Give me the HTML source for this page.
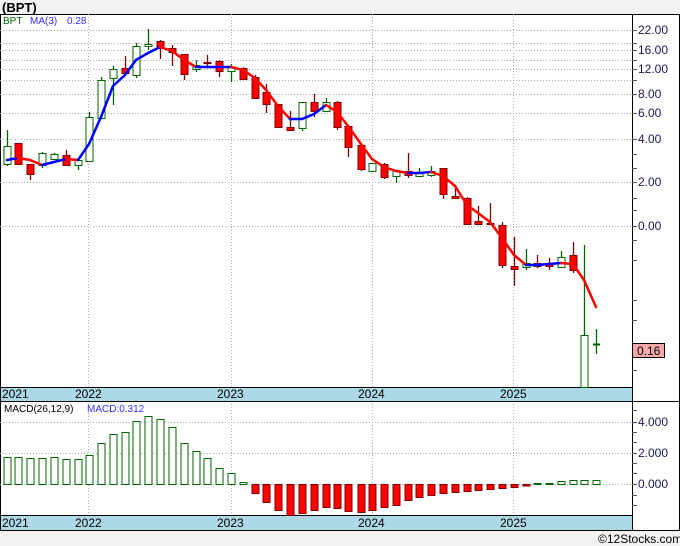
<!DOCTYPE html>
<html><head><meta charset="utf-8"><style>
html,body{margin:0;padding:0;background:#f2f2f2;}
svg{display:block;font-family:"Liberation Sans",sans-serif;}
</style></head><body>
<svg id="s" width="680" height="546" viewBox="0 0 680 546" xmlns="http://www.w3.org/2000/svg">
<rect x="0" y="0" width="680" height="546" fill="#f2f2f2"/>
<rect x="0.5" y="14.5" width="679" height="516" fill="#fff" stroke="#000"/>
<text x="2" y="12" font-size="13" font-weight="bold" fill="#000">(BPT)</text>
<g id="grid" stroke="#aaa" stroke-dasharray="1,2" stroke-width="1"></g>
<rect x="1" y="387" width="631" height="14" fill="#add8e6"/>
<rect x="1" y="515" width="631" height="15" fill="#add8e6"/>
<line x1="0" y1="387.5" x2="632" y2="387.5" stroke="#000"/>
<line x1="0" y1="401.5" x2="680" y2="401.5" stroke="#000"/>
<line x1="0" y1="515.5" x2="632" y2="515.5" stroke="#000"/>
<line x1="632.5" y1="14" x2="632.5" y2="530" stroke="#000"/>
<g id="ticks" stroke="#555"></g>
<g font-size="12" fill="#000">
<text x="2" y="398">2021</text><text x="75" y="398">2022</text><text x="217" y="398">2023</text><text x="358" y="398">2024</text><text x="500" y="398">2025</text>
<text x="2" y="527">2021</text><text x="75" y="527">2022</text><text x="217" y="527">2023</text><text x="358" y="527">2024</text><text x="500" y="527">2025</text>
</g>
<g font-size="12" fill="#1a1a50">
<text x="638" y="34">22.00</text><text x="638" y="54">16.00</text><text x="638" y="73">12.00</text>
<text x="638" y="98">8.00</text><text x="638" y="117">6.00</text><text x="638" y="143">4.00</text>
<text x="638" y="186">2.00</text><text x="638" y="230">0.00</text>
<text x="638" y="426">4.000</text><text x="638" y="457">2.000</text><text x="638" y="488">0.000</text>
</g>
<text x="3" y="24" font-size="10" fill="#006400">BPT</text>
<text x="30" y="24" font-size="10" fill="#3030ff">MA(3)</text>
<text x="67" y="24" font-size="10" fill="#3030ff">0.28</text>
<text x="4" y="412" font-size="10" fill="#000">MACD(26,12,9)</text>
<text x="87" y="412" font-size="10" fill="#3030ff">MACD:0.312</text>
<g id="c"></g>
<rect x="632.5" y="343.5" width="32" height="14" fill="#f8a8a8" stroke="#000"/>
<text x="637" y="355" font-size="12" fill="#000">0.16</text>
<text x="598" y="543" font-size="12" fill="#000">©12Stocks.com</text>
</svg>
<script>
var NS="http://www.w3.org/2000/svg",g=document.getElementById('grid'),c=document.getElementById('c'),tk=document.getElementById('ticks');
function el(p,t,a){var e=document.createElementNS(NS,t);for(var k in a)e.setAttribute(k,a[k]);p.appendChild(e);return e;}
[30,43,50,60,69,80,94,113,139,182,226].forEach(function(y){el(g,'line',{x1:0,y1:y+.5,x2:632,y2:y+.5});el(tk,'line',{x1:632,y1:y+.5,x2:637,y2:y+.5});});
[422,453,484].forEach(function(y){el(g,'line',{x1:0,y1:y+.5,x2:632,y2:y+.5});});
[410,422,432,442,453,463,473,484,495,505].forEach(function(y){el(tk,'line',{x1:632,y1:y+.5,x2:637,y2:y+.5});});
[154,168,198,210,240,260,300,320,370].forEach(function(y){el(tk,'line',{x1:632,y1:y+.5,x2:637,y2:y+.5});});
[88,231,372,513].forEach(function(x){el(g,'line',{x1:x+.5,y1:14,x2:x+.5,y2:387});el(g,'line',{x1:x+.5,y1:401,x2:x+.5,y2:515});});
var C=[[7,164,146,130,166],[18,143,164,143,164],[30,164,174,164,180],[42,165,153,152,168],[54,159,154,153,160],[66,155,165,150,165],[78,165,160,158,170],[89,161,117,112,161],[101,118,80,77,118],[113,78,69,66,105],[125,68,73,56,75],[136,75,46,43,78],[148,46,44,29,50],[160,41,48,40,59],[172,48,52,45,66],[184,54,74,54,80],[196,69,65,60,72],[207,62,63,55,67],[219,61,71,60,77],[231,71,67,64,82],[243,68,79,67,80],[255,77,98,75,99],[266,92,104,84,113],[278,104,127,104,128],[290,127,130,111,131],[302,128,102,102,131],[314,102,111,94,117],[326,111,102,98,112],[337,102,127,101,130],[348,126,147,126,157],[361,145,169,145,171],[372,171,163,163,172],[384,164,177,163,179],[396,176,170,170,183],[408,171,175,153,178],[419,176,173,168,177],[431,175,171,166,177],[443,168,194,168,199],[455,196,198,185,199],[467,198,224,197,224],[478,221,224,206,225],[490,223,224,203,225],[502,225,265,222,268],[514,266,269,237,286],[526,267,263,249,270],[537,263,266,255,268],[549,264,266,258,270],[561,267,257,251,267],[573,255,270,242,273],[584,387,335,245,387],[596,344.5,344,329,354]];
C.forEach(function(d){var x=d[0],up=d[2]<d[1],col=up?'#006400':'#800000';
el(c,'line',{x1:x+.5,y1:d[3],x2:x+.5,y2:d[4],stroke:col,'stroke-width':1.3});
var t=Math.min(d[1],d[2]),b=Math.max(d[1],d[2]);
if(b-t<1){el(c,'line',{x1:x-3,y1:t+.5,x2:x+4,y2:t+.5,stroke:col,'stroke-width':2});}
else el(c,'rect',{x:x-3,y:t+.5,width:7,height:b-t,fill:up?'#fff':'#f00',stroke:up?'#006400':'#800000','stroke-width':1});});
var M=[[7,160],[18,158],[30,160],[42,165],[54,162],[66,159],[78,160],[89,144],[101,117],[113,86],[125,75],[136,60],[148,53],[160,47],[172,51],[184,60],[196,67],[207,67],[219,67],[231,67],[243,70],[255,78],[266,90],[278,106],[290,119],[302,119],[314,114],[326,105],[337,112],[348,126],[361,144],[372,159],[384,167],[396,171],[408,173],[419,173],[431,172],[443,176],[455,186],[467,205],[478,213],[490,222],[502,238],[514,255],[526,265],[537,265],[549,264],[561,263],[573,264],[584,280],[596,307]];
for(var i=1;i<M.length;i++){el(c,'line',{x1:M[i-1][0],y1:M[i-1][1],x2:M[i][0],y2:M[i][1],stroke:M[i][1]<=M[i-1][1]?'#0000ff':'#ff0000','stroke-width':2.5,'stroke-linecap':'round'});}
var H=[457,457,458,458,457,459,459,455,443,434,432,421,416,419,427,443,451,458,468,473,482,493,502,510,515,513,510,507,508,511,512,510,507,505,500,497,495,493,492,491,490,489,488,487,485.5,483,483,481,480,480,480];
H.forEach(function(y,i){var x=C[i][0];
if(y<484)el(c,'rect',{x:x-3,y:y+.5,width:7,height:484-y,fill:'#fff',stroke:'#006400'});
else el(c,'rect',{x:x-3,y:484.5,width:7,height:y-484,fill:'#f00',stroke:'#800000'});});
</script>
</body></html>
